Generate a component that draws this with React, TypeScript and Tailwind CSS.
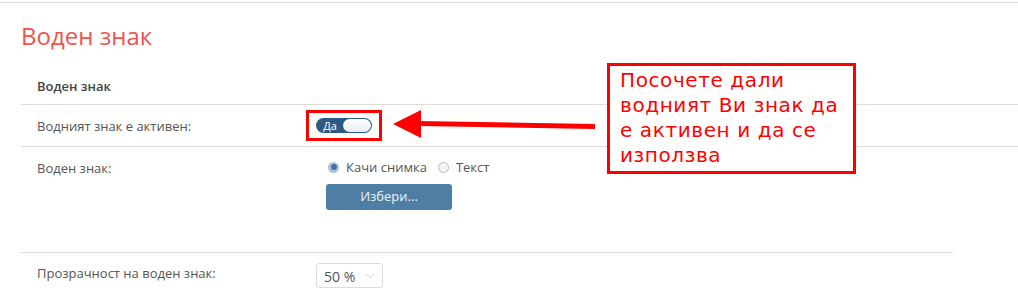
import { ChevronDown } from "lucide-react";

const Radio = ({ checked, label }: { checked?: boolean; label: string }) => (
  <label className="flex items-center gap-[7px]">
    {checked ? (
      <span className="w-[11px] h-[11px] rounded-full bg-[#a9c3dc] flex items-center justify-center">
        <span className="w-[6px] h-[6px] rounded-full bg-[#3f73a3]" />
      </span>
    ) : (
      <span className="w-[11px] h-[11px] rounded-full border border-[#bbb] bg-[#f3f3f3]" />
    )}
    <span>{label}</span>
  </label>
);

const Toggle = () => (
  <div className="w-[56px] h-[15px] rounded-full bg-[#2b5a84] flex items-center p-[1px]">
    <span className="w-[26px] text-center text-[11px] leading-none text-white">Да</span>
    <span className="flex-1 h-[13px] rounded-full bg-gradient-to-b from-white to-[#e8eef4]" />
  </div>
);

const App = () => {
  return (
    <div className="relative w-[1018px] h-[307px] overflow-hidden bg-white font-['Open_Sans',sans-serif] text-[13px] text-[#555]">
      <div className="mt-[2px] border-t border-[#ddd]" />
      <h1 className="mt-[18px] ml-[21px] h-[30px] text-[24px] leading-[30px] text-[#ef5350]">Воден знак</h1>

      <div className="mt-[25px] ml-[21px]">
        <div className="h-[29px] pl-[16px] border-b border-[#ddd] font-semibold text-[#444] leading-[20px]">Воден знак</div>

        <div className="flex items-center h-[42px] border-b border-[#ddd]">
          <div className="w-[295px] pl-[16px] leading-[20px]">Водният знак е активен:</div>
          <Toggle />
        </div>

        <div className="flex h-[106px] mr-[65px] border-b border-[#ddd]">
          <div className="w-[295px] pl-[16px] pt-[11px] leading-[20px]">Воден знак:</div>
          <div className="pl-[12px] pt-[10px] flex flex-col">
            <div className="flex items-center gap-[11px] h-[20px] leading-[20px]">
              <Radio checked label="Качи снимка" />
              <Radio label="Текст" />
            </div>
            <button className="mt-[7px] -ml-[2px] w-[126px] h-[26px] rounded-[3px] bg-[#4f7ea5] text-[#eef3f8] text-[13px]">
              Избери...
            </button>
          </div>
        </div>

        <div className="flex items-start pt-[10px]">
          <div className="w-[295px] pl-[16px] leading-[20px]">Прозрачност на воден знак:</div>
          <div className="w-[67px] h-[25px] rounded-[3px] border border-[#ddd] flex items-center justify-between pl-[7px] pr-[5px]">
            <span className="text-[14px] text-[#555] pt-[2px]">50 %</span>
            <ChevronDown className="w-[14px] h-[14px] text-[#aaa]" strokeWidth={1} />
          </div>
        </div>
      </div>

      {/* annotations */}
      <div className="absolute left-[306px] top-[110px] w-[76px] h-[31px] border-[3px] border-[#ff0000]" />
      <svg className="absolute left-0 top-0" width="1018" height="307">
        <line x1="595" y1="126.5" x2="418" y2="123.5" stroke="#ff0000" strokeWidth="5" />
        <polygon points="393,124 421,110 421,138" fill="#ff0000" />
      </svg>
      <div className="absolute left-[607px] top-[63px] w-[249px] h-[111px] border-[3px] border-[#ff0000] bg-white pl-[10px] pt-[2px] font-['DejaVu_Sans',sans-serif] text-[20px] leading-[25px] tracking-[0.6px] text-[#ff0000] whitespace-nowrap">
        Посочете дали
        <br />
        водният Ви знак да
        <br />
        е активен и да се
        <br />
        използва
      </div>
    </div>
  );
};

export default App;
